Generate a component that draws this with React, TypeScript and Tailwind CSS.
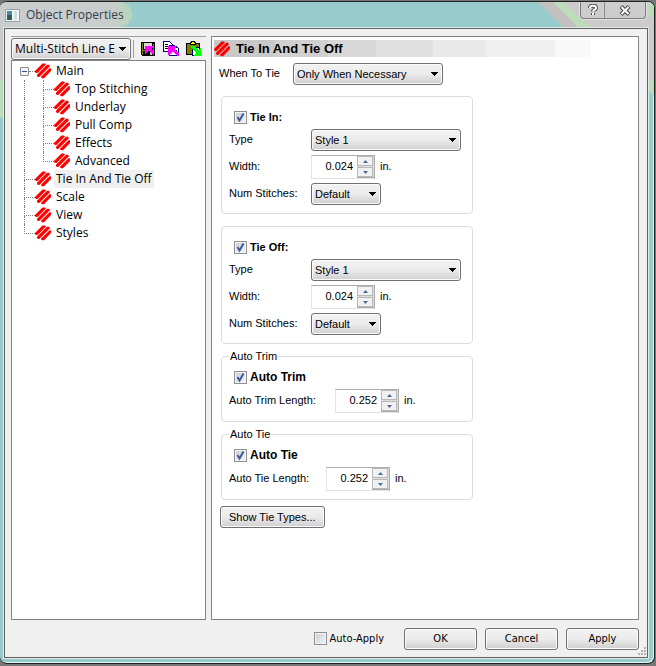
import { useId, useState } from "react";
import type { ReactNode } from "react";

const ARIAL = "font-['Liberation_Sans',Arial,sans-serif]";
const SEGOE = "font-['Open_Sans','Segoe_UI',sans-serif]";
const TAHOMA = "font-['DejaVu_Sans_Condensed',Tahoma,sans-serif]";

const FACE =
  "rounded-[3px] border border-[#707070] bg-linear-to-b from-[#f2f2f2] from-0% via-[#ebebeb] via-50% to-[#cfcfcf] shadow-[inset_0_0_0_1px_#fbfbfb]";

function StitchIcon() {
  return (
    <svg className="size-4 shrink-0" viewBox="0 0 16 16" fill="#fe0000" aria-hidden="true">
      <path d="M0 8 7.500.500H10l1 1L2.500 10H1L0 9z" />
      <path d="M2 11.700 12 1.700h2l1 1.500L5 13.200 4 14H3l-1-1z" />
      <path d="M6 13.700 14.500 5.200H16V8l-7 7.300H7.500L6 14.500z" />
    </svg>
  );
}

function SaveIcon() {
  return (
    <svg className="size-4" viewBox="0 0 16 16" shapeRendering="crispEdges" aria-hidden="true">
      <path fill="#000" d="M1 1h14v14H2l-1-1z" />
      <path fill="#808000" d="M2 2h1v12H2zM13 3h1v11h-1zM3 9h10v1H3z" />
      <path fill="#d8d8d8" d="M4 2h8v6H4z" />
      <path fill="#c0c0c0" d="M10 11h2v3h-2z" />
      <path fill="#ff00ff" d="M5 5h8v1l-2 2 3 3v2h-2l-3-3-4 3H5z" />
    </svg>
  );
}

function CopyIcon() {
  return (
    <svg className="size-4" viewBox="0 0 16 16" shapeRendering="crispEdges" aria-hidden="true">
      <path fill="#fff" stroke="#000080" d="M.5.5h6l3 3v7h-9z" />
      <path stroke="#000" d="M2 3.5h3M2 5.5h5M2 7.5h5" />
      <path fill="#fff" stroke="#000080" d="M6.5 4.5h5l4 3v7h-9z" />
      <path stroke="#000" d="M12 9.5h2M12 11.5h2" />
      <path fill="#ff00ff" d="M5 5h8v1l-2 2 5 5v2h-2l-4-4-4 3H5z" />
    </svg>
  );
}

function PasteIcon() {
  return (
    <svg className="size-4" viewBox="0 0 16 16" shapeRendering="crispEdges" aria-hidden="true">
      <path fill="#808000" stroke="#000" d="M.5 2.5h13v11H.5z" />
      <path fill="#ffff00" stroke="#000" d="M4.5 3.5v-2h1v-1h3v1h1v2z" />
      <path fill="#fff" stroke="#000080" d="M6.5 6.5h6l2 2v6h-8z" />
      <path fill="#00ff00" d="M5 5h3l4 4 3-3v9H7l3-3-5-5z" />
    </svg>
  );
}

function Arrow() {
  return (
    <svg className="pointer-events-none absolute top-1/2 right-[5px] h-1 w-[7px] -translate-y-1/2" viewBox="0 0 7 4" shapeRendering="crispEdges" aria-hidden="true">
      <path d="M0 0h7L3.5 4z" />
    </svg>
  );
}

function Dropdown({ id, label, options, className }: { id?: string; label?: string; options: string[]; className: string }) {
  return (
    <span className={`relative inline-block h-[22px] ${className}`}>
      <select id={id} aria-label={label} className={`block h-full w-full appearance-none overflow-hidden pr-3 pl-[3px] ${FACE}`}>
        {options.map((o) => (
          <option key={o}>{o}</option>
        ))}
      </select>
      <Arrow />
    </span>
  );
}

function Check({ checked, onChange, children, className }: { checked: boolean; onChange: (v: boolean) => void; children: ReactNode; className?: string }) {
  return (
    <label className={`flex items-center gap-[3px] ${className ?? ""}`}>
      <span className="relative size-[13px]">
        <input
          type="checkbox"
          checked={checked}
          onChange={(e) => onChange(e.target.checked)}
          className="block size-[13px] appearance-none border border-[#8e8f8f] bg-linear-to-br from-[#c8ccd2] to-[#f6f6f6] shadow-[inset_0_0_0_1px_#f4f4f4]"
        />
        {checked && (
          <svg className="pointer-events-none absolute inset-0" viewBox="0 0 13 13" fill="none" stroke="#3c5a9c" strokeWidth="2" aria-hidden="true">
            <path d="M3.5 6 5.5 9.5 9.5 2.5" />
          </svg>
        )}
      </span>
      {children}
    </label>
  );
}

function Spinner({ id, initial }: { id: string; initial: number }) {
  const [value, setValue] = useState(initial);
  const step = (d: number) => setValue((v) => Math.max(0, Math.round((v + d) * 1000) / 1000));
  const btn = "flex h-[10px] w-full items-center justify-center border border-[#b8b8b8] bg-[#f1f1f1]";
  return (
    <span className="flex h-6 w-16 border border-t-[#ababab] border-r-[#ababab] border-b-[#e3e3e3] border-l-[#e3e3e3] bg-white">
      <input
        id={id}
        value={value.toFixed(3)}
        onChange={(e) => setValue(Number(e.target.value) || 0)}
        className="h-5 w-0 flex-1 bg-transparent pr-1 text-right outline-none"
      />
      <span className="flex w-[17px] flex-col justify-center gap-px border-b border-[#ababab] bg-[#dcdcdc] pr-px">
        <button type="button" aria-label="Increase" className={btn} onClick={() => step(0.001)}>
          <svg className="h-[3px] w-[5px]" viewBox="0 0 5 3" fill="#4a6a9c" aria-hidden="true"><path d="M0 3h5L2.5 0z" /></svg>
        </button>
        <button type="button" aria-label="Decrease" className={btn} onClick={() => step(-0.001)}>
          <svg className="h-[3px] w-[5px]" viewBox="0 0 5 3" fill="#4a6a9c" aria-hidden="true"><path d="M0 0h5L2.5 3z" /></svg>
        </button>
      </span>
    </span>
  );
}

function Field({ label, labelWidth, children }: { label: string; labelWidth: string; children: (id: string) => ReactNode }) {
  const id = useId();
  return (
    <div className="flex items-center">
      <label htmlFor={id} className={`shrink-0 pb-0.5 ${labelWidth}`}>{label}</label>
      {children(id)}
    </div>
  );
}

function TieGroup({ title }: { title: string }) {
  const [on, setOn] = useState(true);
  return (
    <fieldset aria-label={title} className="w-[252px] rounded-[4px] border border-[#dcdcdc] px-[7px] pt-[10px] pb-2">
      <Check checked={on} onChange={setOn} className="mb-0.5 ml-[5px] h-5 font-bold">{title}</Check>
      <div className="flex flex-col gap-1">
        <Field label="Type" labelWidth="w-[82px]">
          {(id) => <Dropdown id={id} options={["Style 1"]} className="w-[150px]" />}
        </Field>
        <Field label="Width:" labelWidth="w-[82px]">
          {(id) => (<><Spinner id={id} initial={0.024} /><span className="ml-[5px] pb-0.5">in.</span></>)}
        </Field>
        <Field label="Num Stitches:" labelWidth="w-[82px]">
          {(id) => <Dropdown id={id} options={["Default"]} className="w-[70px]" />}
        </Field>
      </div>
    </fieldset>
  );
}

function AutoGroup({ title, labelWidth }: { title: string; labelWidth: string }) {
  const [on, setOn] = useState(true);
  return (
    <fieldset className="mt-1.5 w-[252px] rounded-[4px] border border-[#dcdcdc] px-[7px] pt-[5px] pb-2">
      <legend className="h-3 px-px leading-3">{title}</legend>
      <Check checked={on} onChange={setOn} className="mb-0.5 ml-[5px] h-5 text-xs font-bold">{title}</Check>
      <Field label={`${title} Length:`} labelWidth={labelWidth}>
        {(id) => (<><Spinner id={id} initial={0.252} /><span className="ml-[5px] pb-0.5">in.</span></>)}
      </Field>
    </fieldset>
  );
}

function Branch({ last = false }: { last?: boolean }) {
  return (
    <span className="flex h-full w-[11px] shrink-0 flex-col">
      <span className="h-[10px] border-b border-l border-dotted border-[#808080]" />
      {!last && <span className="flex-1 border-l border-dotted border-[#808080]" />}
    </span>
  );
}

function TreeLabel({ children, selected = false }: { children: string; selected?: boolean }) {
  return (
    <>
      <StitchIcon />
      <button type="button" className={`ml-[3px] h-[18px] px-0.5 leading-[16px] whitespace-nowrap ${selected ? "bg-[#f0f0f0]" : ""}`}>
        {children}
      </button>
    </>
  );
}

const CHILDREN = ["Top Stitching", "Underlay", "Pull Comp", "Effects", "Advanced"];
const ROOTS = ["Tie In And Tie Off", "Scale", "View", "Styles"];

function Tree() {
  return (
    <nav aria-label="Property pages" className={`flex-1 border border-[#828282] bg-white pt-px text-xs ${SEGOE}`}>
      <ul>
        <li>
          <div className="flex h-[18px] items-center pl-2">
            <button type="button" aria-label="Collapse Main" className="flex size-[9px] items-center justify-center rounded-[1px] border border-[#8a8a8a] bg-[#f4f4f4]">
              <span className="h-px w-[5px] bg-[#3050a0]" />
            </button>
            <span className="w-1.5 border-b border-dotted border-[#808080]" />
            <TreeLabel>Main</TreeLabel>
          </div>
          <ul>
            {CHILDREN.map((c, i) => (
              <li key={c} className="flex h-[18px] items-center pl-3">
                <span className="h-full w-[19px] shrink-0 border-l border-dotted border-[#808080]" />
                <Branch last={i === CHILDREN.length - 1} />
                <TreeLabel>{c}</TreeLabel>
              </li>
            ))}
          </ul>
        </li>
        {ROOTS.map((r, i) => (
          <li key={r} className="flex h-[18px] items-center pl-3">
            <Branch last={i === ROOTS.length - 1} />
            <TreeLabel selected={i === 0}>{r}</TreeLabel>
          </li>
        ))}
      </ul>
    </nav>
  );
}

function TitleBar() {
  return (
    <header className={`flex h-[26px] items-start text-xs text-[#33404c] ${SEGOE}`}>
      <div className="flex h-[25px] items-center gap-1.5 rounded-r-full bg-linear-to-r from-[#c9cdcd] from-85% to-[#b5d6b9] pt-px pr-2 pl-[5px]">
        <svg className="h-[13px] w-[15px]" viewBox="0 0 15 13" aria-hidden="true">
          <path fill="#f4f6f6" stroke="#9a9fa0" d="M.5.5h14v12H.5z" />
          <path fill="#4a86a0" d="M2 2h5v9H2z" />
          <path fill="#2f5f58" d="M2 6h5v5H2z" />
          <path fill="#cfe0e4" d="M9 2h3v9H9z" />
        </svg>
        <h1>Object Properties</h1>
      </div>
      <div className="mr-2 ml-auto flex h-[17px] rounded-b-[4px] border border-t-0 border-[#7c7c7c] bg-[#cdcdcd] shadow-[0_0_0_1px_#e2e2e2]">
        <button type="button" aria-label="Help" className="flex w-6 items-center justify-center border-r border-[#8c8c8c]">
          <svg className="size-3" viewBox="0 0 12 12" fill="none" aria-hidden="true">
            <path stroke="#4c4c4c" strokeWidth="4" d="M3 4c0-3 6-3 6 0 0 2-3 1.500-3 3.500M6 9v2" />
            <path stroke="#fff" strokeWidth="2" d="M3 4c0-3 6-3 6 0 0 2-3 1.500-3 3.500M6 9v2" />
          </svg>
        </button>
        <button type="button" aria-label="Close" className="flex w-10 items-center justify-center">
          <svg className="h-[11px] w-3" viewBox="0 0 12 11" fill="none" aria-hidden="true">
            <path stroke="#4c4c4c" strokeWidth="4" d="m2 1.500 8 8m0-8-8 8" />
            <path stroke="#fff" strokeWidth="2" d="m2.500 2 7 7m0-7-7 7" />
          </svg>
        </button>
      </div>
    </header>
  );
}

function Backdrop() {
  return (
    <>
      <svg className="absolute top-0 left-0 h-[120px] w-5" viewBox="0 0 20 120" aria-hidden="true">
        <path fill="#c8cccc" d="M0 0h20v28H4v50H0z" />
        <path fill="#b9dcbc" d="M0 78h4v38H0z" />
      </svg>
      <svg className="absolute top-0 right-0 h-[100px] w-[116px]" viewBox="0 0 116 100" aria-hidden="true">
        <path fill="#c3c0c0" d="M0 0h20l30 28H28z" />
        <path fill="#cbcbcb" d="M24 0h92v90L50 28z" />
        <path fill="#bcdcba" d="M15 0h10l31 28H43zM96 0h20v18zM108 78h8v16l-8-8z" />
      </svg>
    </>
  );
}

export default function App() {
  const [auto, setAuto] = useState(false);
  const action = `h-[22px] w-[73px] ${FACE}`;
  return (
    <div className={`flex min-h-screen flex-col bg-[#777] pt-px pr-px pb-0.5 text-[11px] leading-4 text-black ${ARIAL}`}>
      <main className="relative flex flex-1 flex-col overflow-hidden rounded-[7px] border border-l-0 border-[#222] bg-[#98cbcb] shadow-[inset_-1px_-1px_0_#e4f4f4]">
        <Backdrop />
        <div className="relative flex flex-1 flex-col pr-1.5 pb-[5px] pl-1">
          <div className="-mr-1.5 -ml-1"><TitleBar /></div>
          <div className="flex flex-1 flex-col border border-[#626262] bg-[#f0f0f0] pt-[7px] pr-2 pl-1.5 shadow-[0_0_0_1px_#dfeaea]">
            <div className="flex flex-1 gap-[5px]">
              <section className="flex w-[195px] shrink-0 flex-col">
                <div className={`flex h-6 items-center border-t border-[#a0a0a0] text-xs ${SEGOE}`}>
                  <Dropdown label="Object type" options={["Multi-Stitch Line E"]} className="w-[120px]" />
                  <span className="ml-0.5 h-[18px] border-l border-[#a0a0a0]" />
                  <div className="ml-1.5 flex gap-[7px]">
                    <button type="button" aria-label="Save"><SaveIcon /></button>
                    <button type="button" aria-label="Copy"><CopyIcon /></button>
                    <button type="button" aria-label="Paste"><PasteIcon /></button>
                  </div>
                </div>
                <Tree />
              </section>
              <section className="flex-1 border border-[#828282] bg-white px-0.5 pt-[3px]">
                <h2 className="flex h-[17px] items-center gap-1.5 bg-[linear-gradient(90deg,#c8c8c8_60px,#d0d0d0_60px_114px,#d8d8d8_114px_162px,#e0e0e0_162px_219px,#e9e9e9_219px_272px,#f0f0f0_272px_341px,#f9f9f9_341px_377px,#fff_377px)] text-[13px] font-bold">
                  <StitchIcon />
                  Tie In And Tie Off
                </h2>
                <div className="pl-[5px]">
                  <div className="mt-1.5">
                    <Field label="When To Tie" labelWidth="w-[74px]">
                      {(id) => <Dropdown id={id} options={["Only When Necessary"]} className="w-[150px]" />}
                    </Field>
                  </div>
                  <div className="mt-[11px] ml-0.5">
                    <div className="flex flex-col gap-3">
                      <TieGroup title="Tie In:" />
                      <TieGroup title="Tie Off:" />
                    </div>
                    <AutoGroup title="Auto Trim" labelWidth="w-[106px]" />
                    <AutoGroup title="Auto Tie" labelWidth="w-[97px]" />
                  </div>
                  <button type="button" className={`mt-1.5 ml-px h-[22px] px-2 ${FACE}`}>Show Tie Types...</button>
                </div>
              </section>
            </div>
            <footer className={`relative flex h-[37px] items-center justify-end gap-2 ${TAHOMA}`}>
              <Check checked={auto} onChange={setAuto} className="mr-3">Auto-Apply</Check>
              <button type="button" className={action}>OK</button>
              <button type="button" className={action}>Cancel</button>
              <button type="button" className={action}>Apply</button>
              <svg className="absolute -right-2 bottom-0 size-3" viewBox="0 0 12 12" fill="#b0b0b0" aria-hidden="true">
                <path d="M9 2h2v2H9zM6 5h2v2H6zM9 5h2v2H9zM3 8h2v2H3zM6 8h2v2H6zM9 8h2v2H9z" />
              </svg>
            </footer>
          </div>
        </div>
      </main>
    </div>
  );
}
